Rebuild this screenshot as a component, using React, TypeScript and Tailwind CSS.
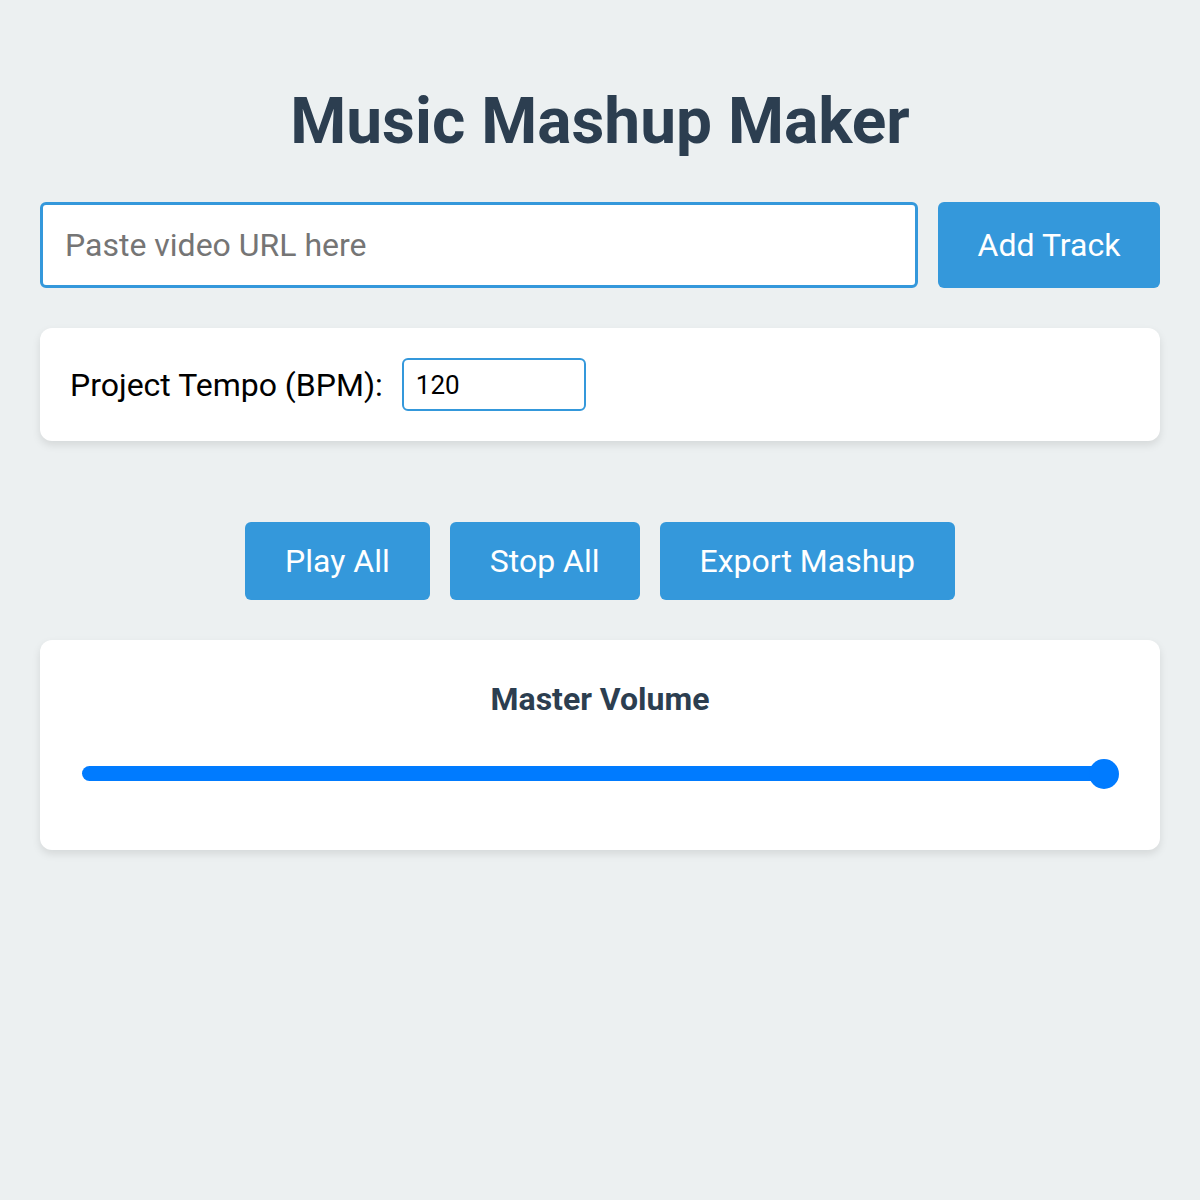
import React from "react";

export default function App() {
  return (
    <div
      className="min-h-[1200px] w-full bg-[#ecf0f1] px-10 pt-[86px]"
      style={{ fontFamily: "Roboto, 'Noto Sans', sans-serif" }}
    >
      <h1 className="text-center text-[64px] font-bold leading-none text-[#2c3e50] py-[4px]">
        Music Mashup Maker
      </h1>
      <div className="mt-[44px] flex gap-5">
        <input
          className="h-[86px] flex-1 rounded-[6px] border-[3px] border-[#3498db] bg-white px-[22px] text-[32px] text-[#333] outline-none placeholder:text-[#757575]"
          placeholder="Paste video URL here"
        />
        <button className="h-[86px] w-[222px] rounded-[6px] bg-[#3498db] text-[32px] text-white">
          Add Track
        </button>
      </div>
      <div className="mt-10 flex h-[113px] items-center rounded-[12px] bg-white px-[30px] shadow-[0_4px_8px_rgba(0,0,0,0.1)]">
        <label className="text-[32px] text-black">Project Tempo (BPM):</label>
        <input
          className="ml-[19px] h-[53px] w-[184px] rounded-[6px] border-2 border-[#3498db] bg-white px-[12px] text-[26px] text-black outline-none"
          defaultValue="120"
        />
      </div>
      <div className="mt-[81px] flex justify-center gap-5">
        <button className="h-[78px] rounded-[6px] bg-[#3498db] px-10 text-[32px] text-white">
          Play All
        </button>
        <button className="h-[78px] rounded-[6px] bg-[#3498db] px-10 text-[32px] text-white">
          Stop All
        </button>
        <button className="h-[78px] rounded-[6px] bg-[#3498db] px-10 text-[32px] text-white">
          Export Mashup
        </button>
      </div>
      <div className="mt-10 flex h-[210px] flex-col items-center rounded-[12px] bg-white px-[42px] pt-[40px] shadow-[0_4px_8px_rgba(0,0,0,0.1)]">
        <div className="text-[32px] font-bold leading-[38px] text-[#2c3e50]">Master Volume</div>
        <div className="relative mt-[48px] h-[15px] w-full rounded-full bg-[#007bff]">
          <div className="absolute -right-px top-1/2 h-[30px] w-[30px] -translate-y-1/2 rounded-full bg-[#007bff]" />
        </div>
      </div>
    </div>
  );
}
